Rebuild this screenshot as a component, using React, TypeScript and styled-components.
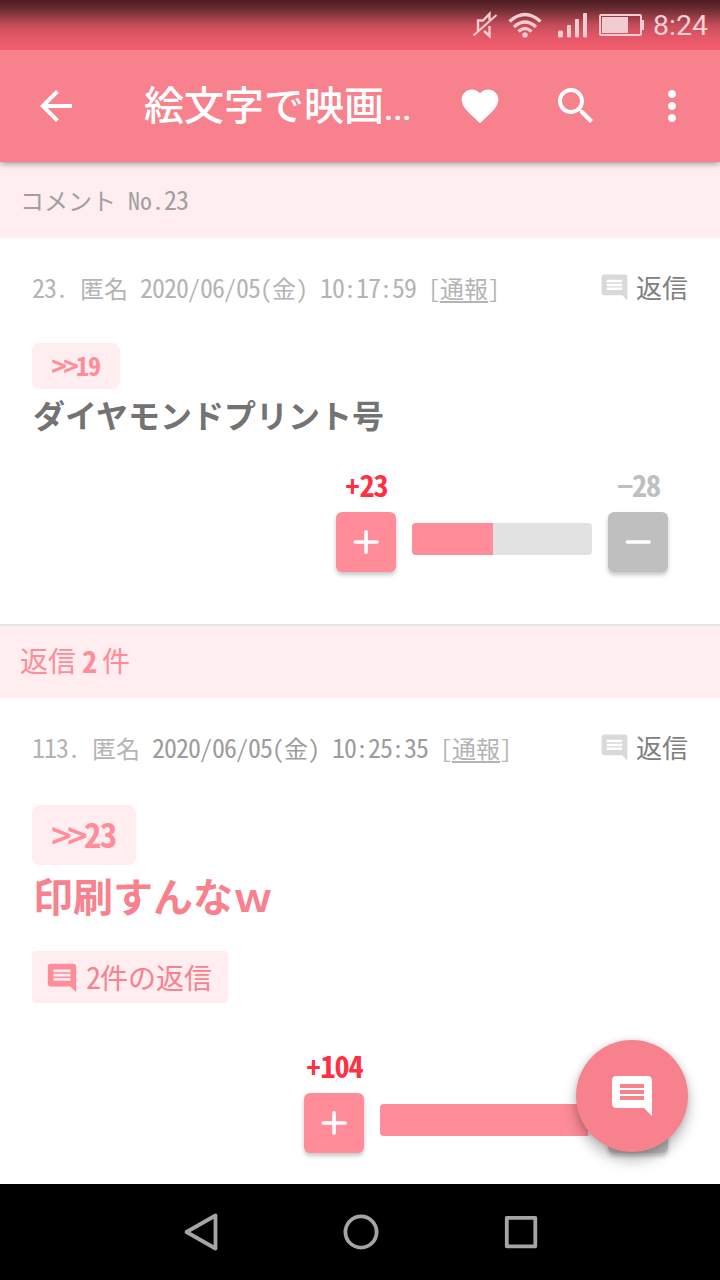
import React from 'react';
import styled, { createGlobalStyle } from 'styled-components';

const GlobalStyle = createGlobalStyle`
  *, *::before, *::after { box-sizing: border-box; }
  body {
    margin: 0;
    background: #fff;
    font-family: "Noto Sans CJK JP", sans-serif;
    font-feature-settings: "hwid" 1;
  }
`;

const rose = '#f7828e';
const pink = '#ff8c98';
const blush = '#ffedef';

const Screen = styled.div`
  position: relative;
  display: flex;
  flex-direction: column;
  width: 720px;
  height: 1280px;
  overflow: hidden;
  background: #fff;
`;

const StatusBar = styled.div`
  position: relative;
  z-index: 2;
  display: flex;
  flex: none;
  align-items: center;
  justify-content: flex-end;
  height: 50px;
  padding-right: 12px;
  background: linear-gradient(#4e1e24 0, #672a31 8px, #c44c59 25px, #e25766 36px, #f35d6d 50px);
`;

const Clock = styled.span`
  width: 55px;
  margin-left: 9px;
  padding-top: 2px;
  font: 400 28.500px/50px Roboto, sans-serif;
  font-feature-settings: normal;
  color: #f4d0d5;
  white-space: nowrap;
`;

const AppBar = styled.header`
  position: relative;
  z-index: 1;
  display: flex;
  flex: none;
  align-items: center;
  height: 112px;
  padding: 0 24px 0 32px;
  background: ${rose};
  color: #fff;
  box-shadow: 0 1px 7px rgba(0, 0, 0, 0.45);
`;

const Title = styled.h1`
  flex: 1;
  margin: 0 0 0 64px;
  font-size: 40px;
  font-weight: 500;
  line-height: 56px;
  white-space: nowrap;
`;

const Dots = styled.span`
  font-family: Roboto, sans-serif;
  font-size: 33px;
`;

const Actions = styled.div`
  display: flex;
  align-items: center;
  gap: 48px;
`;

const HeartSlot = styled.span`
  display: flex;
  justify-content: center;
  width: 48px;
`;

const Subheader = styled.div`
  flex: none;
  height: 76px;
  padding-left: 20px;
  background: ${blush};
  color: #a0a0a0;
  font-size: 24px;
  line-height: 74px;
`;

const SectionHeader = styled.h2`
  display: flex;
  flex: none;
  gap: 6px;
  height: 74px;
  margin: 0;
  padding-left: 20px;
  border-top: 2px solid #e5e5e5;
  background: ${blush};
  color: ${pink};
  font-size: 28px;
  font-weight: 400;
  line-height: 68px;
`;

const Comment = styled.article<{ $height: number }>`
  display: flex;
  flex: none;
  flex-direction: column;
  align-items: flex-start;
  height: ${(p) => p.$height}px;
  padding: 30px 32px 0;
`;

const Meta = styled.div`
  display: flex;
  justify-content: space-between;
  align-items: center;
  width: 100%;
  height: 40px;
  color: #b4b4b4;
  font-size: 24px;
  line-height: 38px;
  padding-bottom: 2px;
  white-space: pre;
`;

const Posted = styled.span<{ $dark?: boolean }>`
  color: ${(p) => (p.$dark ? '#9c9c9c' : 'inherit')};
`;

const Report = styled.a`
  text-decoration: underline;
  text-decoration-thickness: 2px;
  text-underline-offset: 3px;
`;

const ReplyLink = styled.span`
  display: flex;
  align-items: center;
  gap: 6px;
  color: #808080;
  font-size: 26px;

  svg { color: #d9d9d9; }
`;

/* Slightly enlarged half-width digits that keep a half-em pitch. */
const Digits = styled.span`
  font-size: 1.080em;
  letter-spacing: -0.037em;
`;

const Anchor = styled.span<{ $large?: boolean }>`
  display: flex;
  width: ${(p) => (p.$large ? 104 : 88)}px;
  height: ${(p) => (p.$large ? 60 : 46)}px;
  margin-top: ${(p) => (p.$large ? 37 : 35)}px;
  padding: 0 20px;
  border-radius: 8px;
  background: ${blush};
  color: ${pink};
  font-size: ${(p) => (p.$large ? 32 : 24)}px;
  font-weight: 700;
  line-height: ${(p) => (p.$large ? 57 : 43)}px;
`;

const Chevrons = styled.span`
  font-size: 1.200em;
  font-weight: 400;
  letter-spacing: -0.083em;
  -webkit-text-stroke: 0.800px currentColor;
`;

const Body = styled.p<{ $large?: boolean }>`
  height: ${(p) => (p.$large ? 66 : 54)}px;
  margin: 0;
  padding-left: 1px;
  color: ${(p) => (p.$large ? rose : '#737373')};
  font-size: ${(p) => (p.$large ? 40 : 32)}px;
  font-weight: 700;
  font-feature-settings: normal;
  line-height: ${(p) => (p.$large ? 61 : 51)}px;
`;

const ReplyCount = styled.span`
  display: flex;
  align-items: center;
  gap: 7px;
  height: 52px;
  margin-top: 20px;
  padding: 0 16px 0 13px;
  border-radius: 4px;
  background: ${blush};
  color: ${rose};
  font-size: 28px;
  line-height: 46px;

  svg { color: ${pink}; margin-top: 2px; }
  span { margin-bottom: 2px; }
`;

const Votes = styled.div<{ $top: number }>`
  display: flex;
  align-self: flex-end;
  gap: 16px;
  margin: ${(p) => p.$top}px 20px 0 0;
`;

const VoteColumn = styled.div<{ $color: string }>`
  display: flex;
  flex-direction: column;
  align-items: center;
  width: 60px;
  color: ${(p) => p.$color};
`;

const VoteCount = styled.span`
  height: 43px;
  padding-left: 1px;
  font-size: 28px;
  font-weight: 700;
  line-height: 30px;
`;

const Minus = styled.span`
  font-feature-settings: normal;
  letter-spacing: -0.050em;
`;

const VoteButton = styled.button<{ $color: string }>`
  display: flex;
  align-items: center;
  justify-content: center;
  width: 60px;
  height: 60px;
  padding: 0;
  border: 0;
  border-radius: 6px;
  background: ${(p) => p.$color};
  box-shadow: 0 3px 4px rgba(0, 0, 0, 0.22);
`;

const Track = styled.div<{ $width: number }>`
  width: ${(p) => p.$width}px;
  height: 32px;
  margin-top: 54px;
  border-radius: 4px;
  overflow: hidden;
  background: #e2e2e2;
`;

const Fill = styled.div`
  height: 100%;
  background: ${pink};
`;

const Fab = styled.button`
  position: absolute;
  left: 576px;
  top: 1040px;
  display: flex;
  align-items: center;
  justify-content: center;
  width: 112px;
  height: 112px;
  padding: 0;
  border: 0;
  border-radius: 50%;
  background: ${rose};
  color: #fff;
  box-shadow: 0 8px 14px rgba(0, 0, 0, 0.27), 0 0 6px rgba(0, 0, 0, 0.12);
`;

const NavBar = styled.nav`
  display: flex;
  flex: none;
  align-items: center;
  justify-content: center;
  height: 96px;
  background: #000;
`;

const paths = {
  back: 'M20 11H7.83l5.59-5.59L12 4l-8 8 8 8 1.41-1.41L7.83 13H20v-2z',
  heart:
    'M12 21.35l-1.45-1.32C5.4 15.36 2 12.28 2 8.5 2 5.42 4.42 3 7.5 3c1.74 0 3.41.81 4.5 2.09C13.09 3.81 14.76 3 16.5 3 19.58 3 22 5.42 22 8.5c0 3.78-3.4 6.86-8.55 11.54L12 21.35z',
  search:
    'M15.5 14h-.79l-.28-.27C15.41 12.59 16 11.11 16 9.5 16 5.91 13.09 3 9.5 3S3 5.91 3 9.5 5.91 16 9.5 16c1.61 0 3.09-.59 4.23-1.57l.27.28v.79l5 4.99L20.49 19l-4.99-5zm-6 0C7.01 14 5 11.99 5 9.5S7.01 5 9.5 5 14 7.01 14 9.5 11.99 14 9.5 14z',
  more: 'M12 8c1.1 0 2-.9 2-2s-.9-2-2-2-2 .9-2 2 .9 2 2 2zm0 2c-1.1 0-2 .9-2 2s.9 2 2 2 2-.9 2-2-.9-2-2-2zm0 6c-1.1 0-2 .9-2 2s.9 2 2 2 2-.9 2-2-.9-2-2-2z',
  comment:
    'M21.99 4c0-1.1-.89-2-1.99-2H4c-1.1 0-2 .9-2 2v12c0 1.1.9 2 2 2h14l4 4-.01-18zM18 14H6v-2h12v2zm0-3H6V9h12v2zm0-3H6V6h12v2z',
};

const Icon = ({ name, size = 48 }: { name: keyof typeof paths; size?: number }) => (
  <svg width={size} height={size} viewBox="0 0 24 24" fill="currentColor">
    <path d={paths[name]} />
  </svg>
);

const StatusIcons = () => (
  <svg width="174" height="50" viewBox="470 0 174 50" fill="none" stroke="#f1ccd1">
    <path d="M473.500 35.500 496.500 15" strokeWidth="2" />
    <path d="M478 31V20.500H483L489.500 14V20M489.500 26V36L484 31" strokeWidth="2.400" />
    <path d="M509.500 21.500Q525 7.500 540.500 21.500M514 27Q525 17 536 27M518.500 31.500Q525 25.500 531.500 31.500" strokeWidth="3.400" />
    <g fill="#f1ccd1" stroke="none">
      <circle cx="525" cy="35" r="2.700" />
      <rect x="558" y="30.500" width="5" height="7" rx="1.500" />
      <rect x="567" y="25" width="4" height="12.500" rx="1" />
      <rect x="575" y="19" width="4" height="18.500" rx="1" />
      <rect x="583" y="13" width="4" height="24.500" rx="1" />
      <rect x="602" y="17" width="26" height="16" />
      <rect x="642" y="20" width="2" height="10" />
    </g>
    <rect x="600" y="15" width="41" height="20" rx="1" strokeWidth="2" />
  </svg>
);

const Sign = ({ plus }: { plus?: boolean }) => (
  <svg width="28" height="28" viewBox="0 0 28 28" stroke="#fff" strokeWidth="3.600" strokeLinecap="round">
    <path d={plus ? 'M3.300 14H25M14 3.700V24.300' : 'M3.300 14H25'} />
  </svg>
);

const Numeric = ({ text }: { text: string }) => (
  <>
    {text.split(/(\d+)/).map((part, i) => (i % 2 ? <Digits key={i}>{part}</Digits> : part))}
  </>
);

interface VoteRowProps {
  plus: number;
  minus: number;
  width: number;
  top: number;
}

const VoteRow = ({ plus, minus, width, top }: VoteRowProps) => (
  <Votes $top={top}>
    <VoteColumn $color="#ff3044">
      <VoteCount>
        <Numeric text={`+${plus}`} />
      </VoteCount>
      <VoteButton $color={pink} aria-label="plus">
        <Sign plus />
      </VoteButton>
    </VoteColumn>
    <Track $width={width}>
      <Fill style={{ width: `${(plus / (plus + minus)) * 100}%` }} />
    </Track>
    <VoteColumn $color="#bfbfbf">
      <VoteCount>
        <Minus>−</Minus>
        <Digits>{minus}</Digits>
      </VoteCount>
      <VoteButton $color="#bfbfbf" aria-label="minus">
        <Sign />
      </VoteButton>
    </VoteColumn>
  </Votes>
);

const AnchorBadge = ({ no, large }: { no: number; large?: boolean }) => (
  <Anchor $large={large}>
    <Chevrons>&gt;&gt;</Chevrons>
    <Digits>{no}</Digits>
  </Anchor>
);

interface CommentMetaProps {
  no: number;
  time: string;
  dark?: boolean;
}

const CommentMeta = ({ no, time, dark }: CommentMetaProps) => (
  <Meta>
    <span>
      <Numeric text={`${no}. 匿名 `} />
      <Posted $dark={dark}>
        <Numeric text={`2020/06/05(金) ${time}`} />
      </Posted>{' '}
      [<Report>通報</Report>]
    </span>
    <ReplyLink>
      <Icon name="comment" size={31} />
      返信
    </ReplyLink>
  </Meta>
);

export default function App() {
  return (
    <Screen>
      <GlobalStyle />
      <StatusBar>
        <StatusIcons />
        <Clock>8:24</Clock>
      </StatusBar>
      <AppBar>
        <Icon name="back" />
        <Title>
          絵文字で映画<Dots>...</Dots>
        </Title>
        <Actions>
          <HeartSlot>
            <Icon name="heart" size={44} />
          </HeartSlot>
          <Icon name="search" />
          <Icon name="more" />
        </Actions>
      </AppBar>
      <Subheader>
        <Numeric text="コメント No.23" />
      </Subheader>
      <Comment $height={386}>
        <CommentMeta no={23} time="10:17:59" />
        <AnchorBadge no={19} />
        <Body>ダイヤモンドプリント号</Body>
        <VoteRow plus={23} minus={28} width={180} top={26} />
      </Comment>
      <SectionHeader>
        <span>返信</span>
        <b>
          <Numeric text="2" />
        </b>
        <span>件</span>
      </SectionHeader>
      <Comment $height={486}>
        <CommentMeta no={113} time="10:25:35" dark />
        <AnchorBadge no={23} large />
        <Body $large>印刷すんなｗ</Body>
        <ReplyCount>
          <Icon name="comment" size={34} />
          <span>
            <Numeric text="2件の返信" />
          </span>
        </ReplyCount>
        <VoteRow plus={104} minus={2} width={212} top={47} />
      </Comment>
      <NavBar>
        <svg width="360" height="48" viewBox="180 1208 360 48" fill="none" stroke="#a5a5a5" strokeWidth="3.800" strokeLinejoin="round">
          <path d="M215.500 1215.500V1248.500L186.500 1232Z" />
          <circle cx="361" cy="1232" r="15.600" />
          <rect x="506.800" y="1217.800" width="28.500" height="28.500" />
        </svg>
      </NavBar>
      <Fab aria-label="comment">
        <Icon name="comment" />
      </Fab>
    </Screen>
  );
}
